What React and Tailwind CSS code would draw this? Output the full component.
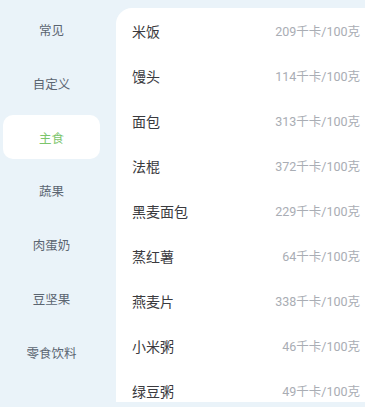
import React from "react";

const cats = ["常见", "自定义", "主食", "蔬果", "肉蛋奶", "豆坚果", "零食饮料"];
const foods = [
  ["米饭", "209千卡/100克"],
  ["馒头", "114千卡/100克"],
  ["面包", "313千卡/100克"],
  ["法棍", "372千卡/100克"],
  ["黑麦面包", "229千卡/100克"],
  ["蒸红薯", "64千卡/100克"],
  ["燕麦片", "338千卡/100克"],
  ["小米粥", "46千卡/100克"],
  ["绿豆粥", "49千卡/100克"],
];

export default function App() {
  return (
    <div
      className="flex h-[407px] w-[365px] overflow-hidden bg-[#eaf3f9]"
      style={{ fontFamily: 'Roboto, "Noto Sans CJK SC", sans-serif' }}
    >
      <div className="flex w-[103px] shrink-0 flex-col gap-[9.75px] pt-[7.5px]">
        {cats.map((c) =>
          c === "主食" ? (
            <div
              key={c}
              className="ml-[3px] flex h-[44px] w-[97px] items-center justify-center rounded-[10px] bg-white pt-[4px] text-[12.5px] text-[#7cc56c]"
            >
              {c}
            </div>
          ) : (
            <div
              key={c}
              className="flex h-[44px] items-center justify-center pt-[4px] text-[12.5px] text-[#5b6571]"
            >
              {c}
            </div>
          )
        )}
      </div>
      <div className="mb-[5px] ml-[13px] mt-[8px] flex flex-1 flex-col overflow-hidden rounded-tl-[16px] bg-white pt-[1.5px]">
        {foods.map(([n, k]) => (
          <div
            key={n}
            className="flex h-[45px] shrink-0 items-center justify-between pl-[16px] pr-[5px]"
          >
            <span className="text-[14px] text-[#3a3a3e]">{n}</span>
            <span className="text-[12.5px] text-[#a9adb4]">{k}</span>
          </div>
        ))}
      </div>
    </div>
  );
}
